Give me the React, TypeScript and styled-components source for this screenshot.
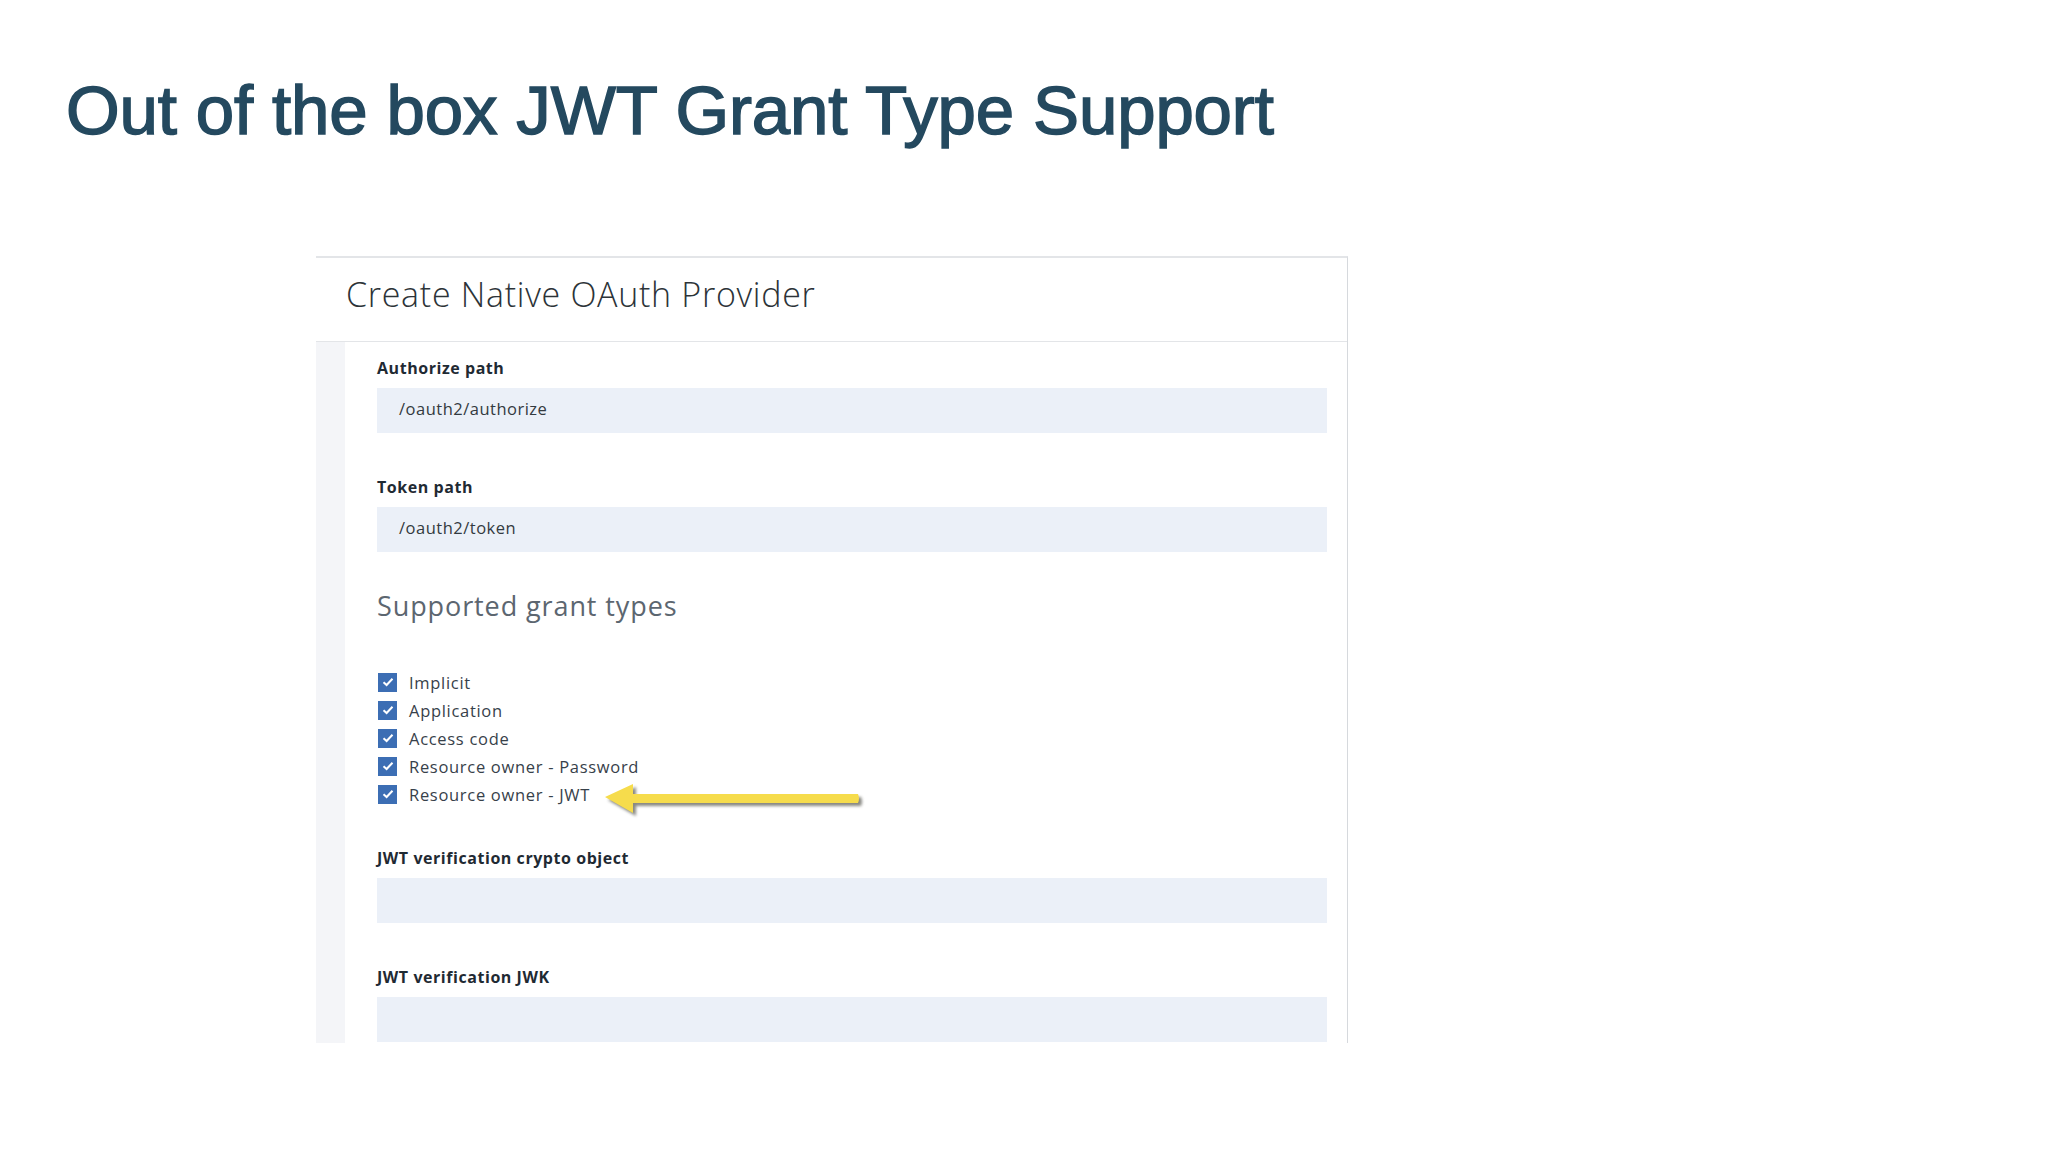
import styled, { createGlobalStyle } from "styled-components";

const GlobalStyle = createGlobalStyle`
  html, body {
    margin: 0;
    padding: 0;
    background: #ffffff;
  }
`;

const Slide = styled.div`
  width: 2048px;
  height: 1152px;
  overflow: hidden;
  background: #ffffff;
  display: flex;
  flex-direction: column;
`;

const Title = styled.h1`
  margin: 72px 0 0 66px;
  font-family: "Liberation Sans", Arial, sans-serif;
  font-size: 69px;
  font-weight: 400;
  line-height: 78px;
  color: #24495f;
  -webkit-text-stroke: 1.5px #24495f;
  letter-spacing: -0.15px;
`;

const Panel = styled.section`
  margin: 106px 0 0 316px;
  width: 1032px;
  height: 787px;
  box-sizing: border-box;
  border-top: 2px solid #e3e5e8;
  border-right: 1px solid #d6d9dd;
  background: #ffffff;
  display: flex;
  flex-direction: column;
  overflow: hidden;
`;

const PanelHeader = styled.header`
  height: 84px;
  flex-shrink: 0;
  box-sizing: border-box;
  display: flex;
  align-items: center;
  padding: 0 0 12px 30px;
  border-bottom: 1px solid #e3e5e8;
  font-family: "Open Sans", sans-serif;
  font-weight: 300;
  font-size: 34px;
  letter-spacing: 0.7px;
  color: #2c3338;
`;

const PanelBody = styled.div`
  flex: 1;
  display: flex;
  min-height: 0;
`;

const SideStrip = styled.div`
  width: 29px;
  flex-shrink: 0;
  background: #f4f5f8;
`;

const Form = styled.div`
  flex: 1;
  padding: 16px 20px 0 32px;
  display: flex;
  flex-direction: column;
`;

const Field = styled.div<{ $gap?: number }>`
  display: flex;
  flex-direction: column;
  margin-top: ${(p) => p.$gap ?? 0}px;
`;

const Label = styled.label`
  height: 20px;
  line-height: 20px;
  margin-bottom: 10px;
  font-family: "Open Sans", sans-serif;
  font-weight: 700;
  font-size: 16px;
  letter-spacing: 0.55px;
  color: #1f2a33;
`;

const Input = styled.div`
  height: 45px;
  flex-shrink: 0;
  box-sizing: border-box;
  padding: 0 0 4px 22px;
  display: flex;
  align-items: center;
  background: #ebf0f8;
  font-family: "Open Sans", sans-serif;
  font-size: 16.5px;
  letter-spacing: 0.5px;
  color: #333a40;
`;

const SectionTitle = styled.h2`
  margin: 39px 0 0 0;
  height: 34px;
  line-height: 30px;
  font-family: "Open Sans", sans-serif;
  font-weight: 400;
  font-size: 27px;
  letter-spacing: 0.9px;
  color: #5c6670;
`;

const CheckList = styled.ul`
  list-style: none;
  margin: 43px 0 0 0;
  padding: 0;
  display: flex;
  flex-direction: column;
`;

const CheckRow = styled.li`
  position: relative;
  height: 28px;
  display: flex;
  align-items: center;
  gap: 12px;
  font-family: "Open Sans", sans-serif;
  font-size: 16.5px;
  letter-spacing: 0.7px;
  color: #37414a;
`;

const Box = styled.span`
  width: 19px;
  height: 19px;
  margin-left: 1px;
  flex-shrink: 0;
  background: #3c6eb4;
  display: flex;
  align-items: center;
  justify-content: center;
`;

const ArrowMark = styled.svg`
  position: absolute;
  left: 223px;
  top: -2px;
  overflow: visible;
`;

const Check = () => (
  <Box>
    <svg width="12" height="10" viewBox="0 0 12 10">
      <path d="M1.5 5.2 L4.6 8 L10.5 1.8" fill="none" stroke="#ffffff" strokeWidth="2" />
    </svg>
  </Box>
);

const Arrow = () => (
  <ArrowMark width="265" height="40" viewBox="0 0 265 40">
    <defs>
      <filter id="arrowShadow" x="-10%" y="-40%" width="120%" height="180%">
        <feGaussianBlur stdDeviation="1.4" />
      </filter>
    </defs>
    <path
      d="M5 19 L33 6 L33 16 L258 16 Q260 20.5 258 25 L33 25 L33 35 Z"
      transform="translate(3 3)"
      fill="#4a4a40"
      opacity="0.65"
      filter="url(#arrowShadow)"
    />
    <path d="M5 19 L33 6 L33 16 L258 16 Q260 20.5 258 25 L33 25 L33 35 Z" fill="#f6dc4c" />
  </ArrowMark>
);

const grantTypes = [
  "Implicit",
  "Application",
  "Access code",
  "Resource owner - Password",
  "Resource owner - JWT",
];

export default function App() {
  return (
    <>
      <GlobalStyle />
      <Slide>
        <Title>Out of the box JWT Grant Type Support</Title>
        <Panel>
          <PanelHeader>Create Native OAuth Provider</PanelHeader>
          <PanelBody>
            <SideStrip />
            <Form>
              <Field>
                <Label>Authorize path</Label>
                <Input>/oauth2/authorize</Input>
              </Field>
              <Field $gap={44}>
                <Label>Token path</Label>
                <Input>/oauth2/token</Input>
              </Field>
              <SectionTitle>Supported grant types</SectionTitle>
              <CheckList>
                {grantTypes.map((g, i) => (
                  <CheckRow key={g}>
                    <Check />
                    {g}
                    {i === grantTypes.length - 1 && <Arrow />}
                  </CheckRow>
                ))}
              </CheckList>
              <Field $gap={40}>
                <Label>JWT verification crypto object</Label>
                <Input />
              </Field>
              <Field $gap={44}>
                <Label>JWT verification JWK</Label>
                <Input />
              </Field>
            </Form>
          </PanelBody>
        </Panel>
      </Slide>
    </>
  );
}
